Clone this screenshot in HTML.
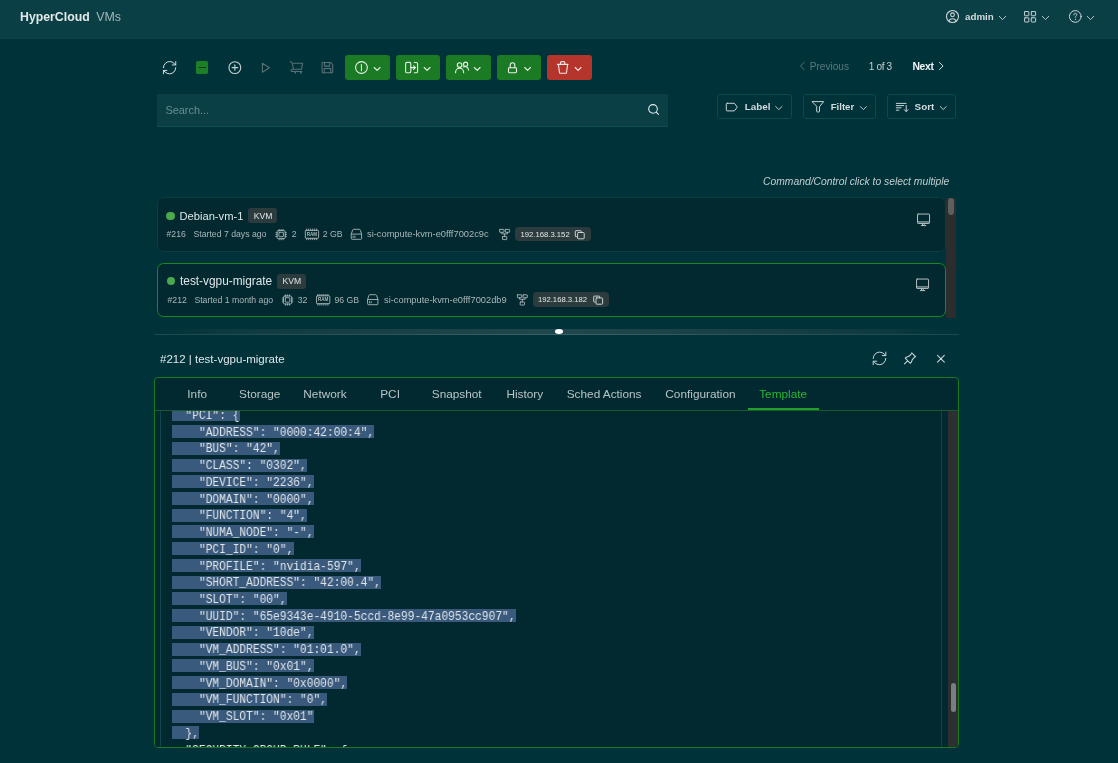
<!DOCTYPE html>
<html><head><meta charset="utf-8">
<style>
*{box-sizing:border-box;margin:0;padding:0}
html,body{width:1118px;height:763px;overflow:hidden;background:#00323a;font-family:"Liberation Sans",sans-serif;color:#d5dcde}
.a{position:absolute}
svg{position:absolute;overflow:visible;fill:none;stroke-linecap:round;stroke-linejoin:round}
.t{position:absolute;white-space:nowrap;line-height:1}
.btn{position:absolute;top:55.1px;height:24.9px;width:44.6px;border-radius:3px;background:#1b7a24}
.obtn{position:absolute;top:93.6px;height:25.7px;border:1px solid #0c4a50;border-radius:3px}
.card{position:absolute;left:156.7px;width:789.7px;background:#02292f;border:1.5px solid #0d3c42;border-radius:6.5px}
.dot{position:absolute;width:8.5px;height:8.5px;border-radius:50%;background:#4aa84e}
.badge{position:absolute;background:#2c3b3d;border-radius:3px}
.tab{position:absolute;top:388.8px;text-align:center;font-size:11.8px;color:#b8c4c6;line-height:1;white-space:nowrap}
.sm{font-size:8.7px;color:#a9b6b8}
pre{position:absolute;font-family:"Liberation Mono",monospace;font-size:11.23px;line-height:16.74px;color:#dfe5e8;white-space:pre}
.hl{position:absolute;left:17.2px;height:13px;background:#3a5a7d}
pre{transform-origin:0 0}
</style></head><body><div id="root" style="position:absolute;left:0;top:0;width:1118px;height:763px;will-change:transform">
<!-- header -->
<div class="a" style="left:0;top:0;width:1118px;height:39px;background:#0a3f45;border-bottom:1px solid #0c434a"></div>
<div class="t" style="left:20px;top:10.8px;font-size:12.3px;font-weight:bold;color:#e3e8e9">HyperCloud</div>
<div class="t" style="left:96.2px;top:11.3px;font-size:12.4px;color:#a3b5b7">VMs</div>

<svg style="left:946px;top:10px" width="13" height="13" viewBox="0 0 13 13" stroke="#d0d8da" stroke-width="1.1"><circle cx="6.5" cy="6.5" r="6"/><circle cx="6.5" cy="4.8" r="1.9"/><path d="M2.6 10.9c1-1.5 2.3-2.2 3.9-2.2s2.9.7 3.9 2.2"/></svg>
<div class="t" style="left:965px;top:11.75px;font-size:9.75px;font-weight:bold;color:#d5dcde">admin</div>
<svg style="left:999px;top:16.3px" width="7" height="4" viewBox="0 0 7 4" stroke="#c9d2d4" stroke-width="0.9"><path d="M0.3 0.3L3.5 3.6L6.7 0.3"/></svg>

<svg style="left:1024px;top:10.8px" width="12.5" height="11.5" viewBox="0 0 12.5 11.5" stroke="#d0d8da" stroke-width="0.95"><rect x="0.55" y="0.55" width="4.3" height="4.2" rx="0.5"/><rect x="7.3" y="0.55" width="4.3" height="4.2" rx="0.5"/><rect x="0.55" y="6.8" width="4.3" height="4.2" rx="0.5"/><rect x="7.3" y="6.8" width="4.3" height="4.2" rx="0.5"/></svg>
<svg style="left:1042.2px;top:15.9px" width="7" height="4" viewBox="0 0 7 4" stroke="#c9d2d4" stroke-width="0.9"><path d="M0.3 0.3L3.5 3.6L6.7 0.3"/></svg>

<svg style="left:1068.8px;top:10.2px" width="13" height="13" viewBox="0 0 13 13" stroke="#d0d8da" stroke-width="1"><circle cx="6.3" cy="6.45" r="5.85"/><path d="M4.8 4.9c0-1 .7-1.6 1.5-1.6s1.5.6 1.5 1.4c0 1.1-1.5 1.2-1.5 2.5" stroke-width="0.9"/><circle cx="6.3" cy="9.3" r="0.25" fill="#d0d8da" stroke-width="0.6"/></svg>
<svg style="left:1087px;top:15.9px" width="7" height="4" viewBox="0 0 7 4" stroke="#c9d2d4" stroke-width="0.9"><path d="M0.3 0.3L3.5 3.6L6.7 0.3"/></svg>

<!-- toolbar icons -->
<div class="btn" style="left:345.4px"></div>
<div class="btn" style="left:395.9px"></div>
<div class="btn" style="left:446px"></div>
<div class="btn" style="left:496.5px"></div>
<div class="btn" style="left:547px;background:#b5342b"></div>
<div class="a" style="left:195.8px;top:61px;width:12.4px;height:13px;background:#1d8026;border-radius:1.8px"></div>
<div class="a" style="left:198.8px;top:66.8px;width:7px;height:1.4px;background:#0b2f22"></div>
<svg style="left:0;top:0" width="1118" height="120" viewBox="0 0 1118 120">
<g stroke="#dfe6e8" stroke-width="1.15">
<g transform="translate(161.4 59.5) scale(0.683)" stroke-width="1.4"><path d="M3 12a9 9 0 0 1 9-9 9.75 9.75 0 0 1 6.74 2.74L21 8M21 3v5h-5M21 12a9 9 0 0 1-9 9 9.75 9.75 0 0 1-6.74-2.74L3 16M8 16H3v5"/></g>
</g>
<g stroke="#c8d2d4" stroke-width="1.1"><circle cx="234.85" cy="67.6" r="5.9"/><path d="M232.1 67.6h5.6M234.85 64.9v5.4"/></g>
<g stroke="#587275" stroke-width="1.05">
<path d="M262.4 63.3v8.9l7-4.45z"/>
<path d="M290.3 61.3l1.9 1.7l1.3 6.3h8l1.1-6.1h-9.1M293.5 69.3c-1.6 0.1-2.5 0.6-2.5 1.3c0 .6.4.9 1 .9h9.9"/>
<path d="M295.3 72.5v.4M300.9 72.5v.4" stroke-width="1.6"/>
<path d="M322.8 62.4h7.8l2.1 2.1v7.6a.7.7 0 0 1-.7.7h-9.2a.7.7 0 0 1-.7-.7v-9a.7.7 0 0 1 .7-.7zM324.6 62.4v3.7h5v-3.7M324.2 73v-4.6h6.6v4.6"/>
</g>
<g stroke="#e8f0e8" stroke-width="1.1">
<circle cx="361.45" cy="67.5" r="5.9"/><path d="M361.45 64.6v6.1"/>
<path d="M374.2 67.5l2.9 2.9l2.9-2.9"/>
<rect x="405.6" y="62.4" width="5.2" height="10.4" rx="1.4"/><path d="M410.8 67.6h4.6M413.6 65.8l1.9 1.8l-1.9 1.8M414.3 62.5h1.9a1.4 1.4 0 0 1 1.4 1.4v7.5a1.4 1.4 0 0 1-1.4 1.4h-1.9"/>
<path d="M424.2 67.5l2.9 2.9l2.9-2.9"/>
<circle cx="459.6" cy="65.1" r="2.3"/><path d="M455.6 72.7v-.6a4 4 0 0 1 8 0v.6"/>
<circle cx="465.6" cy="64.2" r="2.1"/><path d="M463.4 66.9a3.6 3.6 0 0 1 5.1 2.6v.6"/>
<path d="M474.3 67.5l2.9 2.9l2.9-2.9"/>
<rect x="508.5" y="67.7" width="8" height="5" rx="0.9"/><path d="M510.2 67.7v-2.6a2.3 2.3 0 0 1 4.6 0v2.6"/>
<path d="M524.7 67.5l2.9 2.9l2.9-2.9"/>
</g>
<g stroke="#f6e7e5" stroke-width="1.1">
<path d="M557.4 64.4h10.6M560.5 64.4v-1.6a1.2 1.2 0 0 1 1.2-1.2h1.9a1.2 1.2 0 0 1 1.2 1.2v1.6M558.4 64.6l1.1 8.1a.6.6 0 0 0 .6.5h5.8a.6.6 0 0 0 .6-.5l1.1-8.1"/>
<path d="M575.2 67.5l2.9 2.9l2.9-2.9"/>
</g>
</svg>

<!-- pagination -->
<svg style="left:799.7px;top:61.8px" width="4.6" height="8" viewBox="0 0 4.6 8" stroke="#5e7c80" stroke-width="0.9"><path d="M4.2 0.4L0.5 4l3.7 3.6"/></svg>
<div class="t" style="left:809.7px;top:61.7px;font-size:10.1px;color:#5a797d">Previous</div>
<div class="t" style="left:868.7px;top:61.5px;font-size:10.1px;letter-spacing:-0.35px;color:#c5cdcf">1 of 3</div>
<div class="t" style="left:912.4px;top:61.75px;font-size:10.4px;letter-spacing:-0.35px;font-weight:bold;color:#f2f5f5">Next</div>
<svg style="left:938.8px;top:61.8px" width="4.6" height="8" viewBox="0 0 4.6 8" stroke="#e8eded" stroke-width="0.9"><path d="M0.4 0.4L4.1 4L0.4 7.6"/></svg>

<!-- search -->
<div class="a" style="left:157px;top:94px;width:511px;height:33px;background:#0a3f46;border-bottom:1px solid #0e4d54"></div>
<div class="t" style="left:165.4px;top:104.8px;font-size:10.95px;color:#6c8d91">Search...</div>
<svg style="left:648.3px;top:104.2px" width="11" height="11" viewBox="0 0 11 11" stroke="#e5ecee" stroke-width="1.1"><circle cx="5" cy="4.9" r="4.3"/><path d="M8.2 8.1l2.3 2.3"/></svg>

<!-- label/filter/sort -->
<div class="obtn" style="left:717.2px;width:75px"></div>
<div class="obtn" style="left:803.2px;width:73px"></div>
<div class="obtn" style="left:887.1px;width:69px"></div>
<div class="t" style="left:744.7px;top:102.1px;font-size:9.84px;font-weight:bold;color:#d3dbdd">Label</div>
<div class="t" style="left:830.7px;top:102.1px;font-size:9.61px;font-weight:bold;color:#d3dbdd">Filter</div>
<div class="t" style="left:914.6px;top:102.1px;font-size:9.85px;font-weight:bold;color:#d3dbdd">Sort</div>
<svg style="left:0;top:90px" width="1118" height="30" viewBox="0 90 1118 30"><g stroke="#c9d3d5" stroke-width="1">
<path d="M727.2 103.3h7.2l2.9 3.8l-2.9 3.8h-7.2a.9.9 0 0 1-.9-.9v-5.8a.9.9 0 0 1 .9-.9z"/>
<path d="M812.4 101.6h11.3l-4.2 5.1v4.6a.7.7 0 0 1-.7.7h-1.4a.7.7 0 0 1-.7-.7v-4.6z"/>
<path d="M896.3 103.4h9.8M896.3 105.6h7.4M896.3 107.8h4.8M896.3 110.2h2.6M906.2 105.4v6M904.3 109.6l1.9 2l1.9-2"/>
<path d="M775.7 106.6l3.1 3l3.1-3M860.4 106.6l3 3l3-3M940.3 106.6l2.95 2.9l2.95-2.9" stroke-width="0.95"/>
</g></svg>
<div class="t" style="left:763.1px;top:176.5px;font-size:10.32px;font-style:italic;color:#c3cdcf">Command/Control click to select multiple</div>

<!-- cards -->
<div class="card" style="top:197.2px;height:54.8px;"></div>
<div class="dot" style="left:166.1px;top:211.55px"></div>
<div class="t" style="left:179.5px;top:211.25px;font-size:11.16px;color:#dfe6e8">Debian-vm-1</div>
<div class="badge" style="left:248.2px;top:208px;width:29px;height:15.2px"></div>
<div class="t" style="left:253.7px;top:211.9px;font-size:8.6px;color:#dfe5e6">KVM</div>
<div class="t sm" style="left:166.5px;top:230.24px">#216</div>
<div class="t sm" style="left:193.5px;top:230.24px;font-size:8.7px">Started 7 days ago</div>
<div class="t sm" style="left:291.7px;top:230.24px">2</div>
<div class="t sm" style="left:322.8px;top:230.24px">2 GB</div>
<div class="t sm" style="left:367px;top:230.24px;font-size:9.3px">si-compute-kvm-e0fff7002c9c</div>
<div class="badge" style="left:515.1px;top:227px;width:76.1px;height:14.4px;border-radius:4px"></div>
<div class="t" style="left:520.5px;top:230.68px;font-size:7.7px;color:#e2e7e8">192.168.3.152</div>
<svg style="left:0;top:0" width="1118" height="340" viewBox="0 0 1118 340"><g stroke="#a9b6b8" stroke-width="0.9"><g transform="translate(276 229.2)"><rect x="1.1" y="1.4" width="8.1" height="8" rx="1.2"/><rect x="2.9" y="3.1" width="4.5" height="4.4" rx="0.4"/><path d="M3.2 0.2v1.2M5.15 0.2v1.2M7.1 0.2v1.2M3.2 9.4v1.2M5.15 9.4v1.2M7.1 9.4v1.2M-0.1 3.5h1.2M-0.1 5.4h1.2M-0.1 7.3h1.2M9.2 3.5h1.2M9.2 5.4h1.2M9.2 7.3h1.2"/></g><g transform="translate(304.8 228.79999999999998)"><rect x="0.5" y="1.6" width="13.3" height="7.9" rx="0.8"/><path d="M1.9 0.2v1.4M1.9 9.5v1.4M3.9 0.2v1.4M3.9 9.5v1.4M5.9 0.2v1.4M5.9 9.5v1.4M7.9 0.2v1.4M7.9 9.5v1.4M9.9 0.2v1.4M9.9 9.5v1.4M11.9 0.2v1.4M11.9 9.5v1.4"/><text x="7.15" y="7.3" font-size="4.6" font-weight="bold" text-anchor="middle" fill="#a9b6b8" stroke="none" font-family="Liberation Sans">RAM</text></g><g transform="translate(350.7 228.79999999999998)"><path d="M0.6 5.3L1.9 1.3a1.2 1.2 0 0 1 1.1-.8h5.5a1.2 1.2 0 0 1 1.1.8L10.9 5.3V9.7a.8.8 0 0 1-.8.8H1.4a.8.8 0 0 1-.8-.8zM0.6 5.3H10.9M2.5 7.3v1.4M4.2 7.3v1.4"/></g><g transform="translate(499.3 228.79999999999998)"><rect x="0.4" y="0.6" width="4.3" height="2.9" rx="0.3"/><rect x="6" y="0.6" width="4.3" height="2.9" rx="0.3"/><path d="M2.55 3.5V5.1H8.15V3.5M5.35 5.1V7.8"/><rect x="3.2" y="7.8" width="4.3" height="3" rx="0.3"/></g></g><g stroke="#dde3e4" stroke-width="0.9"><g transform="translate(574.9 230.29999999999998)"><path d="M1.6 6.4H1.1a.7.7 0 0 1-.7-.7V1.1a.7.7 0 0 1 .7-.7h4.6a.7.7 0 0 1 .7.7v.9"/><rect x="2.7" y="2.2" width="6.6" height="6.3" rx="0.8"/></g></g><g stroke="#b4c0c2" stroke-width="1.0"><g transform="translate(917 213.5)"><rect x="0.55" y="0.55" width="12" height="9.4" rx="0.6"/><path d="M0.9 8.4h11.3" stroke-width="1.6" stroke-opacity="0.6"/><path d="M5.5 10v2M7.2 10v2M4.3 12.1h4.5"/></g></g></svg>
<div class="card" style="top:262.7px;height:54.8px;border-color:#1c8725;border-width:1.9px"></div>
<div class="dot" style="left:166.75px;top:276.85px"></div>
<div class="t" style="left:180px;top:275.97px;font-size:11.85px;color:#dfe6e8">test-vgpu-migrate</div>
<div class="badge" style="left:277px;top:273.5px;width:29px;height:15.2px"></div>
<div class="t" style="left:282.5px;top:277.4px;font-size:8.6px;color:#dfe5e6">KVM</div>
<div class="t sm" style="left:167.5px;top:295.84px">#212</div>
<div class="t sm" style="left:194.4px;top:295.84px;font-size:8.7px">Started 1 month ago</div>
<div class="t sm" style="left:297.7px;top:295.84px">32</div>
<div class="t sm" style="left:334.5px;top:295.84px">96 GB</div>
<div class="t sm" style="left:384px;top:295.84px;font-size:9.3px">si-compute-kvm-e0fff7002db9</div>
<div class="badge" style="left:532.8px;top:292.4px;width:76.7px;height:14.4px;border-radius:4px"></div>
<div class="t" style="left:537.9px;top:296.08px;font-size:7.7px;color:#e2e7e8">192.168.3.182</div>
<svg style="left:0;top:0" width="1118" height="340" viewBox="0 0 1118 340"><g stroke="#a9b6b8" stroke-width="0.9"><g transform="translate(282.4 294.59999999999997)"><rect x="1.1" y="1.4" width="8.1" height="8" rx="1.2"/><rect x="2.9" y="3.1" width="4.5" height="4.4" rx="0.4"/><path d="M3.2 0.2v1.2M5.15 0.2v1.2M7.1 0.2v1.2M3.2 9.4v1.2M5.15 9.4v1.2M7.1 9.4v1.2M-0.1 3.5h1.2M-0.1 5.4h1.2M-0.1 7.3h1.2M9.2 3.5h1.2M9.2 5.4h1.2M9.2 7.3h1.2"/></g><g transform="translate(316 294.2)"><rect x="0.5" y="1.6" width="13.3" height="7.9" rx="0.8"/><path d="M1.9 0.2v1.4M1.9 9.5v1.4M3.9 0.2v1.4M3.9 9.5v1.4M5.9 0.2v1.4M5.9 9.5v1.4M7.9 0.2v1.4M7.9 9.5v1.4M9.9 0.2v1.4M9.9 9.5v1.4M11.9 0.2v1.4M11.9 9.5v1.4"/><text x="7.15" y="7.3" font-size="4.6" font-weight="bold" text-anchor="middle" fill="#a9b6b8" stroke="none" font-family="Liberation Sans">RAM</text></g><g transform="translate(367 294.2)"><path d="M0.6 5.3L1.9 1.3a1.2 1.2 0 0 1 1.1-.8h5.5a1.2 1.2 0 0 1 1.1.8L10.9 5.3V9.7a.8.8 0 0 1-.8.8H1.4a.8.8 0 0 1-.8-.8zM0.6 5.3H10.9M2.5 7.3v1.4M4.2 7.3v1.4"/></g><g transform="translate(517 294.2)"><rect x="0.4" y="0.6" width="4.3" height="2.9" rx="0.3"/><rect x="6" y="0.6" width="4.3" height="2.9" rx="0.3"/><path d="M2.55 3.5V5.1H8.15V3.5M5.35 5.1V7.8"/><rect x="3.2" y="7.8" width="4.3" height="3" rx="0.3"/></g></g><g stroke="#dde3e4" stroke-width="0.9"><g transform="translate(593.3 295.7)"><path d="M1.6 6.4H1.1a.7.7 0 0 1-.7-.7V1.1a.7.7 0 0 1 .7-.7h4.6a.7.7 0 0 1 .7.7v.9"/><rect x="2.7" y="2.2" width="6.6" height="6.3" rx="0.8"/></g></g><g stroke="#b4c0c2" stroke-width="1.0"><g transform="translate(916 278.5)"><rect x="0.55" y="0.55" width="12" height="9.4" rx="0.6"/><path d="M0.9 8.4h11.3" stroke-width="1.6" stroke-opacity="0.6"/><path d="M5.5 10v2M7.2 10v2M4.3 12.1h4.5"/></g></g></svg>

<!-- list scrollbar -->
<div class="a" style="left:946.2px;top:198px;width:10px;height:119.7px;background:#2b2d2e"></div>
<div class="a" style="left:948.4px;top:198.3px;width:5.9px;height:17.2px;background:#5c5f60;border-radius:3px"></div>

<!-- splitter -->
<div class="a" style="left:154px;top:329px;width:805px;height:5.3px;background:linear-gradient(90deg,rgba(0,50,58,0) 0%,#0f3a41 10%,#183f45 25%,#1f474c 50%,#183f45 75%,#0f3a41 90%,rgba(0,50,58,0) 100%)"></div>
<div class="a" style="left:154px;top:334px;width:805px;height:1px;background:linear-gradient(90deg,#1a4a50 0%,#2a5357 25%,#3a6467 50%,#2a5357 75%,#1a4a50 100%);border-radius:1px"></div>
<div class="a" style="left:555.3px;top:329.4px;width:8px;height:4.8px;background:#ffffff;border-radius:50% 50% 45% 45%"></div>

<!-- detail header -->
<div class="t" style="left:160px;top:353.7px;font-size:11.53px;color:#dfe6e8">#212 | test-vgpu-migrate</div>
<svg style="left:0;top:340px" width="1118" height="40" viewBox="0 340 1118 40"><g stroke="#cdd6d8">
<g transform="translate(871.1 350) scale(0.7)" stroke-width="1.4"><path d="M3 12a9 9 0 0 1 9-9 9.75 9.75 0 0 1 6.74 2.74L21 8M21 3v5h-5M21 12a9 9 0 0 1-9 9 9.75 9.75 0 0 1-6.74-2.74L3 16M8 16H3v5"/></g>
<g transform="translate(901.3 349.94) scale(0.72)" stroke-width="1.45"><path d="M15 4.5l-4 4l-4 1.5l-1.5 1.5l7 7l1.5-1.5l1.5-4l4-4M9 15l-4.5 4.5M14.5 4l5.5 5.5"/></g>
<path d="M937.5 355.3l6.8 6.8M944.3 355.3l-6.8 6.8" stroke-width="1.05"/>
</g></svg>

<!-- tab panel -->
<div class="a" style="left:154px;top:377px;width:805px;height:371px;border:1px solid #1a7a24;border-radius:4px;background:#02292f"></div>
<div class="a" style="left:155px;top:410px;width:803px;height:1px;background:#1a5a2c"></div>
<div class="tab" style="left:166.6px;width:61.2px">Info</div>
<div class="tab" style="left:227.8px;width:63.9px">Storage</div>
<div class="tab" style="left:291.7px;width:66.5px">Network</div>
<div class="tab" style="left:358.2px;width:63.8px">PCI</div>
<div class="tab" style="left:420.3px;width:72.8px">Snapshot</div>
<div class="tab" style="left:494.8px;width:60.1px">History</div>
<div class="tab" style="left:554.9px;width:98.5px">Sched Actions</div>
<div class="tab" style="left:653.4px;width:94.1px">Configuration</div>
<div class="tab" style="left:747.5px;width:71.3px;color:#2db538">Template</div>
<div class="a" style="left:747.6px;top:408.1px;width:71.2px;height:1.8px;background:#22a02c"></div>

<!-- editor -->
<!--ED-->
<div class="a" style="left:155px;top:411px;width:803px;height:336px;overflow:hidden;background:#02292f;border-radius:0 0 3px 3px">
<div class="a" style="left:5px;top:0;width:1px;height:336px;background:#0d4650"></div>
<div class="a" style="left:786px;top:0;width:1px;height:336px;background:#0d4650"></div>
<div class="a" style="left:793px;top:0;width:10px;height:336px;background:#2e2f30"></div>
<div class="a" style="left:795.8px;top:272px;width:5.4px;height:29px;background:#7b7d7e;border-radius:3px"></div>
<div class="hl" style="top:-2.70px;width:67.40px"></div>
<div class="hl" style="top:14.04px;width:202.20px"></div>
<div class="hl" style="top:30.78px;width:107.84px"></div>
<div class="hl" style="top:47.52px;width:134.80px"></div>
<div class="hl" style="top:64.26px;width:141.54px"></div>
<div class="hl" style="top:81.00px;width:141.54px"></div>
<div class="hl" style="top:97.74px;width:134.80px"></div>
<div class="hl" style="top:114.48px;width:141.54px"></div>
<div class="hl" style="top:131.22px;width:121.32px"></div>
<div class="hl" style="top:147.96px;width:188.72px"></div>
<div class="hl" style="top:164.70px;width:208.94px"></div>
<div class="hl" style="top:181.44px;width:114.58px"></div>
<div class="hl" style="top:198.18px;width:343.74px"></div>
<div class="hl" style="top:214.92px;width:141.54px"></div>
<div class="hl" style="top:231.66px;width:188.72px"></div>
<div class="hl" style="top:248.40px;width:141.54px"></div>
<div class="hl" style="top:265.14px;width:175.24px"></div>
<div class="hl" style="top:281.88px;width:155.02px"></div>
<div class="hl" style="top:298.62px;width:141.54px"></div>
<div class="hl" style="top:315.36px;width:26.96px"></div>
<pre style="left:17.20px;top:-3.07px;font-size:12.4px;transform:scaleX(0.9058)">  "PCI": {
    "ADDRESS": "0000:42:00:4",
    "BUS": "42",
    "CLASS": "0302",
    "DEVICE": "2236",
    "DOMAIN": "0000",
    "FUNCTION": "4",
    "NUMA_NODE": "-",
    "PCI_ID": "0",
    "PROFILE": "nvidia-597",
    "SHORT_ADDRESS": "42:00.4",
    "SLOT": "00",
    "UUID": "65e9343e-4910-5ccd-8e99-47a0953cc907",
    "VENDOR": "10de",
    "VM_ADDRESS": "01:01.0",
    "VM_BUS": "0x01",
    "VM_DOMAIN": "0x0000",
    "VM_FUNCTION": "0",
    "VM_SLOT": "0x01"
  },
  "SECURITY_GROUP_RULE": {
    "PROTOCOL": "ALL"</pre>
</div>
<!--/ED-->
</div></body></html>
